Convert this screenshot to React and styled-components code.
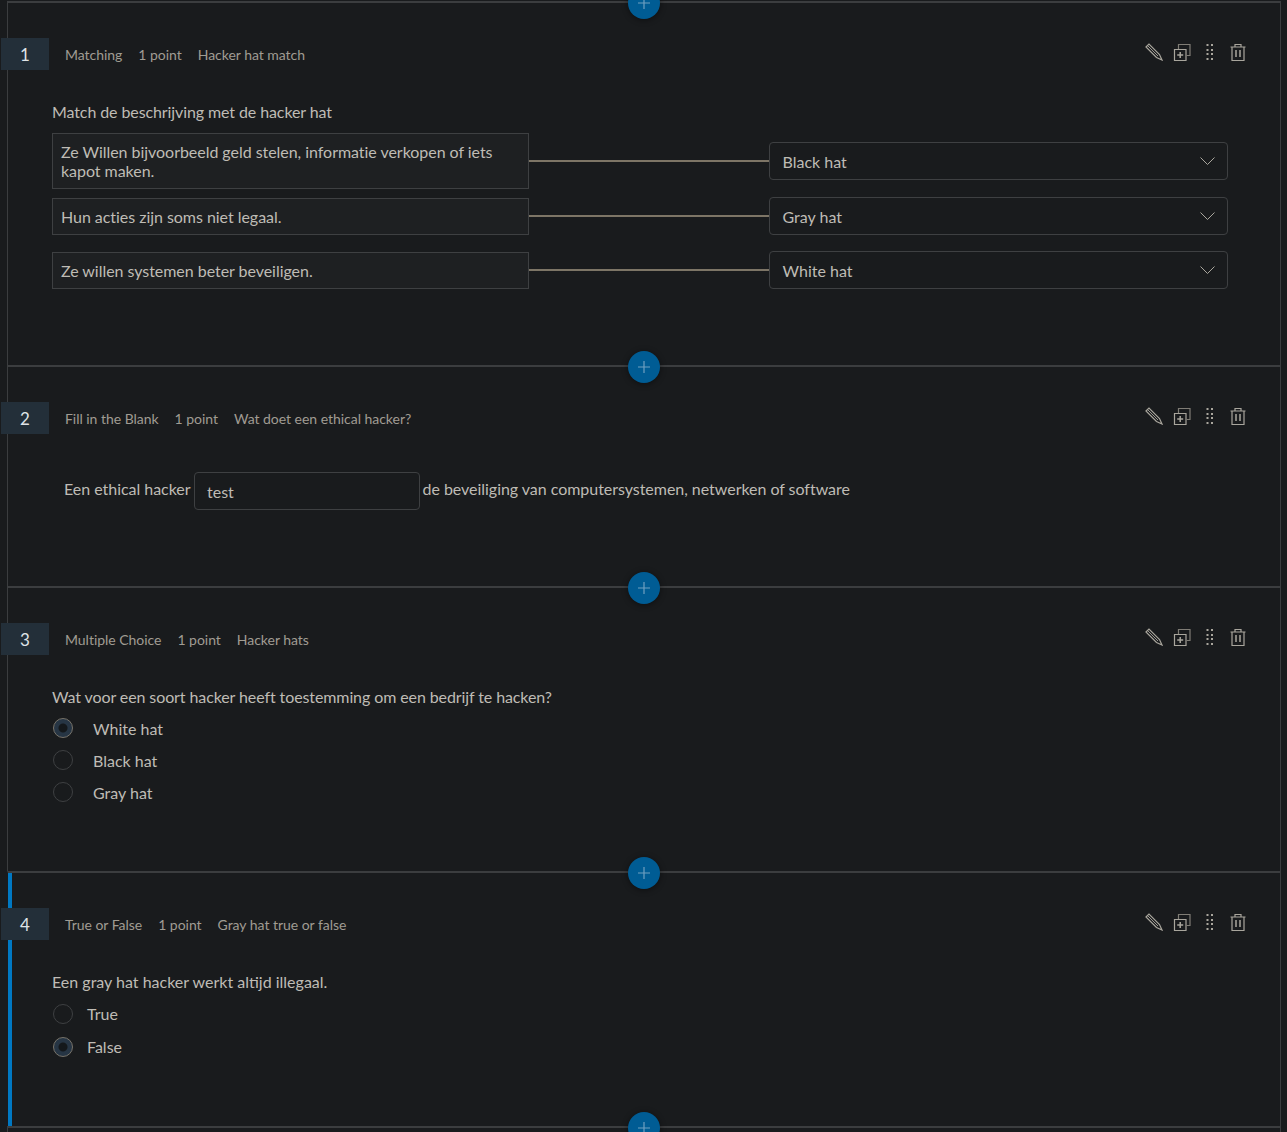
import React from "react";
import styled, { createGlobalStyle } from "styled-components";

const GlobalStyle = createGlobalStyle`
    html, body {
        margin: 0;
        height: 100%;
        overflow: hidden;
        background: #191b1d;
    }
    body {
        font-family: "Lato", "Liberation Sans", sans-serif;
        color: #bfbcb5;
    }
`;

const Page = styled.div`
    padding: 1px 6px 0 7px;
`;

const Section = styled.section`
    position: relative;
    box-sizing: border-box;
    min-height: ${props => props.$height}px;
    border-top: 2px solid #3b3d3f;
    border-left: 1px solid ${props => (props.$active ? "#191b1d" : "#3b3d3f")};
    border-right: 1px solid #3b3d3f;
    padding: 35px 52px 0 44px;
    box-shadow: ${props => (props.$active ? "inset 4px 0 0 #0078c2" : "none")};
`;

const AddButton = styled.button`
    position: absolute;
    top: -16px;
    left: 50%;
    transform: translateX(-50%);
    width: 32px;
    height: 32px;
    padding: 0;
    border: none;
    border-radius: 50%;
    background: #005c94;
    box-shadow: 0 1px 6px rgba(0, 0, 0, 0.45);
    display: flex;
    align-items: center;
    justify-content: center;
`;

const Header = styled.header`
    display: flex;
    align-items: flex-start;
    margin: 0 -24px 0 -51px;
`;

const Badge = styled.div`
    box-sizing: border-box;
    width: 48px;
    height: 32px;
    padding-top: 1px;
    background: #232f39;
    color: #dfe3e6;
    font-size: 17px;
    display: flex;
    align-items: center;
    justify-content: center;
    flex: none;
`;

const Meta = styled.div`
    display: flex;
    gap: 16px;
    height: 32px;
    align-items: center;
    margin-left: 16px;
    font-size: 14px;
    letter-spacing: -0.03px;
    color: #a09c93;
`;

const Actions = styled.div`
    display: flex;
    margin-left: auto;
`;

const ActionIcon = styled.span`
    width: 28px;
    height: 28px;
    display: flex;
    align-items: center;
    justify-content: center;
`;

const Question = styled.p`
    margin: 32px 0 ${props => props.$after}px;
    font-size: 16px;
    line-height: 19px;
    letter-spacing: ${props => props.$spacing || 0}px;
`;

const MatchRow = styled.div`
    display: flex;
    align-items: center;
    margin-bottom: ${props => props.$after}px;
`;

const MatchText = styled.div`
    box-sizing: border-box;
    width: 477px;
    flex: none;
    padding: 8px;
    font-size: 16px;
    line-height: 19px;
    letter-spacing: -0.04px;
    background: #1e2022;
    border: 1px solid #3e4042;
`;

const Connector = styled.div`
    flex: 1;
    height: 2px;
    background: #7d7566;
`;

const Select = styled.div`
    box-sizing: border-box;
    width: 459px;
    height: 38px;
    flex: none;
    padding: 0 12px 0 12.5px;
    display: flex;
    align-items: center;
    justify-content: space-between;
    font-size: 16px;
    border: 1px solid #3e4042;
    border-radius: 4px;
`;

const BlankRow = styled.div`
    display: flex;
    align-items: flex-start;
    gap: 3px;
    margin: 38px 0 0 12px;
    font-size: 16px;
`;

const BlankText = styled.span`
    line-height: 19px;
    margin-top: 7px;
    letter-spacing: -0.035px;
`;

const BlankInput = styled.div`
    box-sizing: border-box;
    width: 226px;
    height: 38px;
    padding: 0 12.5px;
    display: flex;
    align-items: center;
    border: 1px solid #3e4042;
    border-radius: 4px;
`;

const Option = styled.label`
    height: ${props => props.$rowHeight}px;
    display: flex;
    align-items: center;
    font-size: 16px;
`;

const Radio = styled.span`
    box-sizing: border-box;
    width: 20px;
    height: 20px;
    margin: ${props => props.$lift}px ${props => props.$gap}px 0 1px;
    border-radius: 50%;
    flex: none;
    border: 1px solid ${props => (props.$checked ? "#77736a" : "#3e4042")};
    background: ${props =>
        props.$checked
            ? "radial-gradient(circle, #14181b 0 4px, #263544 5px)"
            : "transparent"};
`;

const Plus = () => (
    <svg width="14" height="14" viewBox="0 0 14 14" fill="none" stroke="#6f9fc0" strokeWidth="1.2">
        <path d="M7 1v12M1 7h12" />
    </svg>
);

const Chevron = () => (
    <svg width="15" height="8" viewBox="0 0 15 8" fill="none" stroke="#a9a69d" strokeWidth="1">
        <path d="M.5.5l7 7 7-7" />
    </svg>
);

const iconProps = {
    width: 18,
    height: 18,
    viewBox: "0 0 18 18",
    fill: "none",
    stroke: "#a9a69d",
    strokeWidth: 1.2
};

const PencilIcon = () => (
    <svg {...iconProps}>
        <path d="M1 4 4 1 14.500 11.500 17 17 11.500 14.500Z" />
        <path d="M3 3 13 13" strokeWidth="0.9" />
    </svg>
);

const CopyIcon = () => (
    <svg {...iconProps}>
        <path d="M1.500 6.500h11.500v11h-11.500z" />
        <path d="M5.500 6V1.500h11.500v11H13.500" stroke="#7f7c75" />
        <path d="M7.200 9v6M4.200 12h6" strokeWidth="1.500" />
    </svg>
);

const DragIcon = () => (
    <svg {...iconProps} stroke="none" fill="#a9a69d">
        {[2, 7, 11, 16].map(y => (
            <React.Fragment key={y}>
                <rect x="5.500" y={y - 1} width="2" height="2" />
                <rect x="10" y={y - 1} width="2" height="2" />
            </React.Fragment>
        ))}
    </svg>
);

const TrashIcon = () => (
    <svg {...iconProps}>
        <path d="M1.500 4h15M6 4V1.500h6V4" />
        <path d="M3 4v13.500h12V4" />
        <path d="M7 7v7M11 7v7" strokeWidth="1.500" />
    </svg>
);

const QuestionHeader = ({ number, items }) => (
    <Header>
        <Badge>{number}</Badge>
        <Meta>
            {items.map(item => (
                <span key={item}>{item}</span>
            ))}
        </Meta>
        <Actions>
            <ActionIcon><PencilIcon /></ActionIcon>
            <ActionIcon><CopyIcon /></ActionIcon>
            <ActionIcon><DragIcon /></ActionIcon>
            <ActionIcon><TrashIcon /></ActionIcon>
        </Actions>
    </Header>
);

const matches = [
    { text: "Ze Willen bijvoorbeeld geld stelen, informatie verkopen of iets kapot maken.", answer: "Black hat", after: 8 },
    { text: "Hun acties zijn soms niet legaal.", answer: "Gray hat", after: 16 },
    { text: "Ze willen systemen beter beveiligen.", answer: "White hat", after: 0 }
];

const AddQuestion = () => (
    <AddButton type="button" aria-label="Add question">
        <Plus />
    </AddButton>
);

export default function App() {
    return (
        <Page>
            <GlobalStyle />
            <Section $height={364}>
                <AddQuestion />
                <QuestionHeader number="1" items={["Matching", "1 point", "Hacker hat match"]} />
                <Question $after={12} $spacing={-0.1}>Match de beschrijving met de hacker hat</Question>
                {matches.map(match => (
                    <MatchRow key={match.answer} $after={match.after}>
                        <MatchText>{match.text}</MatchText>
                        <Connector />
                        <Select>
                            {match.answer}
                            <Chevron />
                        </Select>
                    </MatchRow>
                ))}
            </Section>
            <Section $height={221}>
                <AddQuestion />
                <QuestionHeader number="2" items={["Fill in the Blank", "1 point", "Wat doet een ethical hacker?"]} />
                <BlankRow>
                    <BlankText>Een ethical hacker</BlankText>
                    <BlankInput>test</BlankInput>
                    <BlankText>de beveiliging van computersystemen, netwerken of software</BlankText>
                </BlankRow>
            </Section>
            <Section $height={285}>
                <AddQuestion />
                <QuestionHeader number="3" items={["Multiple Choice", "1 point", "Hacker hats"]} />
                <Question $after={6} $spacing={-0.1}>Wat voor een soort hacker heeft toestemming om een bedrijf te hacken?</Question>
                <Option $rowHeight={32}><Radio $checked $lift={-1} $gap={20} />White hat</Option>
                <Option $rowHeight={32}><Radio $lift={-1} $gap={20} />Black hat</Option>
                <Option $rowHeight={32}><Radio $lift={-1} $gap={20} />Gray hat</Option>
            </Section>
            <Section $height={255} $active>
                <AddQuestion />
                <QuestionHeader number="4" items={["True or False", "1 point", "Gray hat true or false"]} />
                <Question $after={6}>Een gray hat hacker werkt altijd illegaal.</Question>
                <Option $rowHeight={33}><Radio $lift={1} $gap={14} />True</Option>
                <Option $rowHeight={33}><Radio $checked $lift={1} $gap={14} />False</Option>
            </Section>
            <Section $height={10}>
                <AddQuestion />
            </Section>
        </Page>
    );
}
